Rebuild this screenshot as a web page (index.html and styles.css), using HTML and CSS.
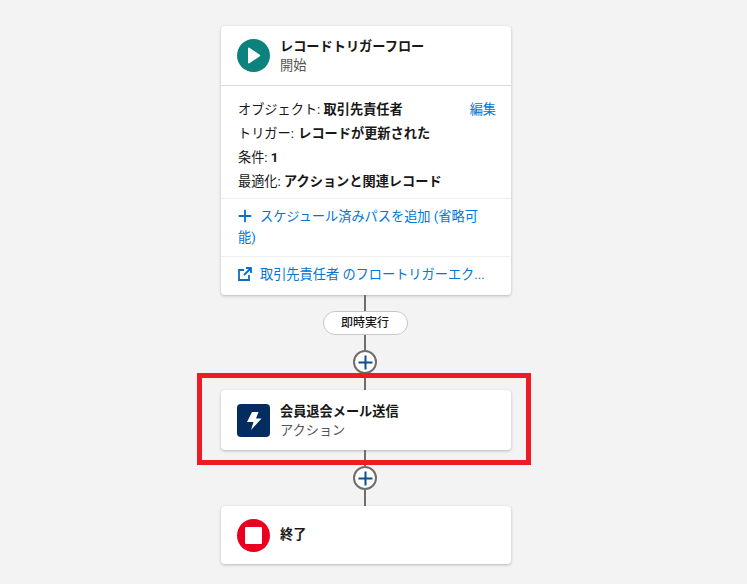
FILE: index.html
```html
<!DOCTYPE html>
<html lang="ja">
<head>
    <meta charset="UTF-8">
    <meta name="viewport" content="width=device-width, initial-scale=1.0">
    <title>レコードトリガーフロー</title>
    <link rel="stylesheet" href="styles.css">
</head>
<body>
    <div class="flow">
        <div class="card">
            <div class="card-head start-head">
                <span class="icon icon-start">
                    <svg width="33" height="33" viewBox="0 0 33 33"><path d="M11 9.500c0-.8.8-1.200 1.400-.8l10.400 7c.6.4.6 1.200 0 1.600l-10.400 7c-.6.4-1.400 0-1.400-.8z" fill="#fff"/></svg>
                </span>
                <div class="titles">
                    <div class="title">レコードトリガーフロー</div>
                    <div class="sub">開始</div>
                </div>
            </div>
            <div class="details">
                <div class="row row-edit">
                    <span>オブジェクト: <b>取引先責任者</b></span>
                    <a class="link">編集</a>
                </div>
                <div class="row">トリガー: <b class="trigger-value">レコードが更新された</b></div>
                <div class="row">条件: <b>1</b></div>
                <div class="row">最適化: <b>アクションと関連レコード</b></div>
            </div>
            <div class="action-row link">
                <svg class="inline-icon" width="14" height="14" viewBox="0 0 14 14"><path d="M7 .7v12.600M.7 7h12.600" stroke="#0b6fc4" stroke-width="1.800" fill="none"/></svg>スケジュール済みパスを追加 (省略可能)
            </div>
            <div class="action-row link explorer">
                <svg class="inline-icon" width="14" height="14" viewBox="0 0 14 14"><path d="M6 3H1v10h10V8M8 1h5v5M13 1 6 8" stroke="#0b6fc4" stroke-width="1.800" fill="none"/></svg>取引先責任者 のフロートリガーエク...
            </div>
        </div>

        <div class="line line-long"></div>
        <div class="pill">即時実行</div>
        <div class="line"></div>
        <button class="add"><svg width="15" height="15" viewBox="0 0 15 15"><path d="M7.500 .5v14M.5 7.500h14" stroke="#0b4f8f" stroke-width="2" fill="none"/></svg></button>
        <div class="line line-long"></div>

        <div class="card">
            <div class="card-head action-head">
                <span class="icon icon-action">
                    <svg width="33" height="33" viewBox="0 0 33 33"><path d="M15 8h6.500L19 14.500h5.500L14 26l2.500-8H10z" fill="#fff"/></svg>
                </span>
                <div class="titles">
                    <div class="title">会員退会メール送信</div>
                    <div class="sub">アクション</div>
                </div>
            </div>
        </div>

        <div class="line line-long"></div>
        <button class="add"><svg width="15" height="15" viewBox="0 0 15 15"><path d="M7.500 .5v14M.5 7.500h14" stroke="#0b4f8f" stroke-width="2" fill="none"/></svg></button>
        <div class="line line-long"></div>

        <div class="card">
            <div class="card-head end-head">
                <span class="icon icon-end">
                    <svg width="33" height="33" viewBox="0 0 33 33"><rect x="8" y="8" width="17" height="17" rx="1" fill="#fff"/></svg>
                </span>
                <div class="title">終了</div>
            </div>
        </div>

        <div class="highlight"></div>
    </div>
</body>
</html>
```

FILE: styles.css
```css
html, body {
    margin: 0;
    height: 584px;
    overflow: hidden;
}

body {
    background-color: #f3f3f3;
    font-family: Roboto, "Noto Sans CJK JP", sans-serif;
    font-size: 13.2px;
    color: #181818;
}

.flow {
    position: relative;
    width: 290px;
    margin-left: 221px;
    padding-top: 26px;
    display: flex;
    flex-direction: column;
    align-items: center;
}

.card {
    width: 100%;
    box-sizing: border-box;
    background-color: white;
    border-radius: 4px;
    box-shadow: 0 1px 3px rgba(0,0,0,0.25);
}

.card-head {
    display: flex;
    align-items: center;
    padding: 0 16px;
    gap: 10px;
}

.start-head {
    height: 59px;
    border-bottom: 1px solid #dddbda;
}

.action-head {
    height: 60px;
}

.action-head .titles {
    padding-top: 2px;
}

.end-head {
    height: 58px;
}

.end-head .title {
    padding-bottom: 2px;
}

.icon {
    width: 33px;
    height: 33px;
    flex-shrink: 0;
    display: block;
}

.icon svg {
    display: block;
}

.icon-start {
    background-color: #0b827c;
    border-radius: 50%;
}

.icon-action {
    background-color: #032d60;
    border-radius: 4px;
}

.icon-end {
    background-color: #ea001e;
    border-radius: 50%;
}

.title {
    font-weight: 700;
    line-height: 19px;
}

.sub {
    color: #555;
    line-height: 19px;
}

.details {
    padding: 12px 15px 4px 17px;
    border-bottom: 1px solid #eeeeee;
}

.row {
    line-height: 24px;
}

.trigger-value {
    margin-left: 1px;
}

.row-edit {
    display: flex;
    justify-content: space-between;
}

.link {
    color: #0176d3;
}

.action-row {
    padding: 8px 22px 8px 17px;
    line-height: 20.500px;
    border-bottom: 1px solid #eeeeee;
}

.explorer {
    border-bottom: none;
    padding-bottom: 9.500px;
    white-space: nowrap;
}

.inline-icon {
    margin-right: 8px;
    vertical-align: -2px;
}

/* connector sits a pixel left of the card centre */
.line, .pill, .add {
    margin-left: -2px;
}

.line {
    width: 2px;
    height: 15px;
    background-color: #706e6b;
}

.line-long {
    height: 16px;
}

.pill {
    width: 85px;
    height: 24px;
    box-sizing: border-box;
    border: 1px solid #c9c7c5;
    border-radius: 12px;
    background-color: white;
    text-align: center;
    font-size: 12px;
    font-weight: 500;
    line-height: 22px;
}

.add {
    width: 24px;
    height: 24px;
    padding: 0;
    box-sizing: border-box;
    border: 2px solid #706e6b;
    border-radius: 50%;
    background-color: white;
    display: flex;
    align-items: center;
    justify-content: center;
}

/* red frame drawn on top of the screenshot */
.highlight {
    position: absolute;
    left: -24px;
    top: 373px;
    width: 334px;
    height: 92px;
    box-sizing: border-box;
    border: 5px solid #ed1c24;
}
```
